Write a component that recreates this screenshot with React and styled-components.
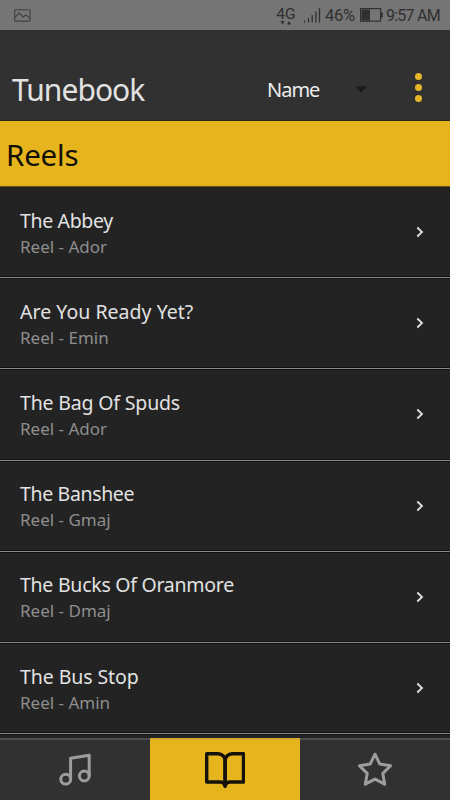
import React, { useState } from 'react';
import styled, { createGlobalStyle } from 'styled-components';

const tunes = [
  { title: 'The Abbey', type: 'Reel', tuneKey: 'Ador', tracking: -0.35 },
  { title: 'Are You Ready Yet?', type: 'Reel', tuneKey: 'Emin', tracking: 0.03 },
  { title: 'The Bag Of Spuds', type: 'Reel', tuneKey: 'Ador', tracking: -0.17 },
  { title: 'The Banshee', type: 'Reel', tuneKey: 'Gmaj', tracking: -0.35 },
  { title: 'The Bucks Of Oranmore', type: 'Reel', tuneKey: 'Dmaj', tracking: -0.26 },
  { title: 'The Bus Stop', type: 'Reel', tuneKey: 'Amin', tracking: -0.08 },
];

const MusicIcon = () => (
  <NavIcon viewBox="0 0 40 40">
    <circle cx="10.7" cy="29.2" r="4.9" />
    <circle cx="29.3" cy="26" r="4.9" />
    <path d="M15.6 29.2V8.3L34.2 5.3V26" />
  </NavIcon>
);

const BookIcon = () => (
  <NavIcon viewBox="0 0 40 40" $width={3.4}>
    <path d="M1.7 3.7h11.4a7 7 0 0 1 7 7v25.5a5.3 5.3 0 0 0-5.3-4.2H1.7z" />
    <path d="M38.5 3.7H27.1a7 7 0 0 0-7 7v25.5a5.3 5.3 0 0 1 5.3-4.2h13.1z" />
  </NavIcon>
);

const StarIcon = () => (
  <NavIcon viewBox="0 0 40 40">
    <path d="M20 4.2l4.8 9.9 10.8 1.6-7.8 7.7 1.9 10.8L20 29.1l-9.7 5.1 1.9-10.8-7.8-7.7 10.8-1.6z" />
  </NavIcon>
);

const tabs = [
  { name: 'tunes', Icon: MusicIcon },
  { name: 'tunebook', Icon: BookIcon },
  { name: 'favourites', Icon: StarIcon },
];

const App = () => {
  const [activeTab, setActiveTab] = useState('tunebook');

  return (
    <>
      <GlobalStyle />
      <Screen>
        <StatusBar>
          <PictureIcon viewBox="0 0 17 13">
            <rect x="0.7" y="0.7" width="15.4" height="11.4" rx="0.8" />
            <path d="M1.2 8.2l4-4.2 4.3 4.2 2.2-2.3L15.8 9" />
          </PictureIcon>
          <StatusGroup>
            <Network>
              4G
              <svg width="12" height="4" viewBox="0 0 12 4">
                <path d="M0.5 0h4L2.5 3.6zM7 3.6h4L9 0z" fill="#303030" />
              </svg>
            </Network>
            <SignalIcon viewBox="0 0 18 16">
              <path d="M1.5 13.5V15.5M5.5 11V15.5M9.2 8V15.5M12.9 4.5V15.5M16.5 1V15.5" />
            </SignalIcon>
            <Percent>46%</Percent>
            <BatteryIcon viewBox="0 0 23 14">
              <rect x="0.6" y="0.6" width="20" height="12.6" fill="none" stroke="#303030" strokeWidth="1.2" />
              <rect x="1.5" y="1.5" width="8.5" height="11" fill="#303030" />
              <rect x="21" y="4.5" width="1.8" height="5" fill="#303030" />
            </BatteryIcon>
            <Clock>9:57 AM</Clock>
          </StatusGroup>
        </StatusBar>
        <Header>
          <PageTitle>Tunebook</PageTitle>
          <SortSelect>
            Name
            <svg width="12" height="7" viewBox="0 0 12 7">
              <path d="M0 0.3h12L6 6.5z" fill="#1b1b1b" />
            </svg>
          </SortSelect>
          <MenuButton>
            <Dot />
            <Dot />
            <Dot />
          </MenuButton>
        </Header>
        <SectionHeading>Reels</SectionHeading>
        <TuneList>
          {tunes.map((tune) => (
            <TuneRow key={tune.title}>
              <div>
                <TuneTitle $tracking={tune.tracking}>{tune.title}</TuneTitle>
                <TuneInfo>{tune.type} - {tune.tuneKey}</TuneInfo>
              </div>
              <Chevron viewBox="0 0 8 12">
                <path d="M1.3 1.5L6 6 1.3 10.5" />
              </Chevron>
            </TuneRow>
          ))}
        </TuneList>
        <BottomNav>
          {tabs.map(({ name, Icon }) => (
            <NavTab
              key={name}
              aria-label={name}
              $active={activeTab === name}
              onClick={() => setActiveTab(name)}
            >
              <Icon />
            </NavTab>
          ))}
        </BottomNav>
      </Screen>
    </>
  );
};

const GlobalStyle = createGlobalStyle`
  * {
    box-sizing: border-box;
  }
  body {
    margin: 0;
    background-color: #232323;
    font-family: "Noto Sans", sans-serif;
  }
`;

const Screen = styled.div`
  display: flex;
  flex-direction: column;
  width: 450px;
  height: 800px;
  overflow: hidden;
  background-color: #232323;
`;

const StatusBar = styled.div`
  display: flex;
  flex: none;
  align-items: center;
  justify-content: space-between;
  height: 30px;
  padding: 0 10px 0 14px;
  background-color: #757575;
  color: #303030;
`;

const PictureIcon = styled.svg`
  width: 17px;
  height: 13px;
  fill: none;
  stroke: #404040;
  stroke-width: 1.1;
`;

const StatusGroup = styled.div`
  display: flex;
  align-items: center;
  height: 30px;
  font-family: Roboto, sans-serif;
`;

const Network = styled.div`
  display: flex;
  flex-direction: column;
  align-items: center;
  width: 20px;
  margin-right: 7px;
  padding-top: 1px;
  font-size: 15.5px;
  line-height: 14px;

  svg {
    flex: none;
  }
`;

const SignalIcon = styled.svg`
  width: 18px;
  height: 16px;
  margin-right: 4px;
  fill: none;
  stroke: #303030;
  stroke-width: 1.3;
`;

const Percent = styled.span`
  width: 32px;
  margin-right: 3px;
  font-size: 16.5px;
  letter-spacing: -0.3px;
  white-space: nowrap;
`;

const BatteryIcon = styled.svg`
  width: 23px;
  height: 14px;
  margin-right: 3px;
`;

const Clock = styled.span`
  width: 54px;
  font-size: 16px;
  letter-spacing: -0.75px;
  white-space: nowrap;
`;

const Header = styled.header`
  display: flex;
  flex: none;
  align-items: center;
  height: 91px;
  padding: 29px 28px 0 12px;
  border-bottom: 1px solid #292415;
  background-color: #313131;
`;

const PageTitle = styled.h1`
  flex: 1;
  margin: 0;
  padding-top: 1px;
  color: #e2e2e2;
  font-size: 30px;
  font-weight: 400;
  letter-spacing: -0.95px;
  line-height: 40px;
`;

const SortSelect = styled.div`
  display: flex;
  align-items: center;
  justify-content: space-between;
  width: 100px;
  margin-right: 48px;
  color: #ececec;
  font-size: 20px;
  letter-spacing: -1px;
  line-height: 28px;
`;

const MenuButton = styled.button`
  display: flex;
  flex-direction: column;
  gap: 4px;
  margin-top: -5px;
  padding: 0;
  border: none;
  background: none;
  cursor: pointer;
`;

const Dot = styled.span`
  width: 7px;
  height: 7px;
  border-radius: 50%;
  background-color: #e3b62b;
`;

const SectionHeading = styled.h2`
  flex: none;
  height: 66px;
  margin: 0;
  padding-left: 6px;
  border-bottom: 1px solid #654f16;
  background-color: #e6b41c;
  color: #121008;
  font-size: 29.5px;
  font-weight: 400;
  letter-spacing: -0.2px;
  line-height: 67px;
`;

const TuneList = styled.div`
  flex: 1;
  min-height: 0;
  overflow: hidden;
`;

const TuneRow = styled.div`
  display: flex;
  align-items: center;
  justify-content: space-between;
  height: 91.2px;
  padding: 0 26px 0 20px;
  border-bottom: 1px solid #888;
  box-shadow: inset 0 -1px #111, 0 1px #111;
`;

const TuneTitle = styled.div`
  padding-top: 2px;
  color: #e2e2e2;
  font-size: 19.5px;
  letter-spacing: ${({ $tracking }) => $tracking}px;
  line-height: 26px;
`;

const TuneInfo = styled.div`
  color: #8e8e8e;
  font-size: 17px;
  line-height: 25px;
`;

const Chevron = styled.svg`
  width: 8px;
  height: 12px;
  fill: none;
  stroke: #e0e0e0;
  stroke-width: 1.8;
`;

const BottomNav = styled.nav`
  display: grid;
  flex: none;
  grid-template-columns: repeat(3, 1fr);
  height: 62px;
`;

const NavTab = styled.button`
  display: flex;
  align-items: center;
  justify-content: center;
  padding: 0;
  border: none;
  border-top: 2px solid ${({ $active }) => ($active ? '#d6aa2c' : '#4e4e4e')};
  background-color: ${({ $active }) => ($active ? '#e6b41c' : '#313131')};
  color: ${({ $active }) => ($active ? '#14120a' : '#9d9d9d')};
  cursor: pointer;
`;

const NavIcon = styled.svg`
  width: 40px;
  height: 40px;
  fill: none;
  stroke: currentColor;
  stroke-width: ${({ $width }) => $width || 3};
  stroke-linecap: round;
  stroke-linejoin: round;
`;

export default App;
